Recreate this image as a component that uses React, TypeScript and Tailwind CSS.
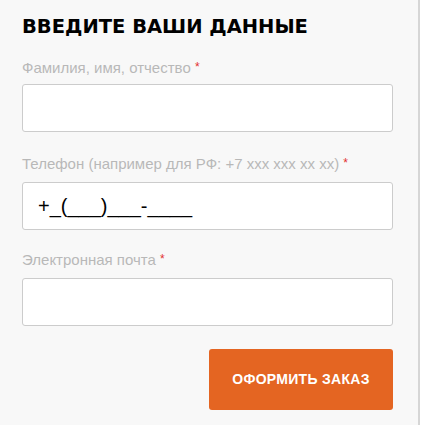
export default function App() {
  return (
    <div className="flex h-[425px] w-[422px] bg-white">
      <div className="w-[420px] border-r-2 border-[#d6d6d6] bg-[#f8f8f8] pl-[22px] pr-[25px] pt-[15px] font-['Liberation_Sans',Arial,sans-serif]">
        <h2 className="font-['DejaVu_Sans',sans-serif] text-[19.5px] font-bold leading-[24px] text-black">
          ВВЕДИТЕ ВАШИ ДАННЫЕ
        </h2>

        <Field label="Фамилия, имя, отчество" className="mt-[20px]" gap="mt-[6px]" />
        <Field
          label="Телефон (например для РФ: +7 xxx xxx xx xx)"
          className="mt-[23px]"
          gap="mt-[8px]"
          value="+_(___)___-____"
        />
        <Field label="Электронная почта" className="mt-[21px]" gap="mt-[8px]" />

        <div className="mt-[23px] flex justify-end">
          <button className="h-[61px] w-[184px] rounded-[3px] bg-[#e46522] text-[14px] font-bold tracking-[0.3px] text-white">
            ОФОРМИТЬ ЗАКАЗ
          </button>
        </div>
      </div>
    </div>
  );
}

function Field({
  label,
  value,
  gap,
  className = "",
}: {
  label: string;
  value?: string;
  gap: string;
  className?: string;
}) {
  return (
    <div className={className}>
      <p className="text-[15px] leading-[18px] text-[#b8b8b8]">
        {label}{" "}
        <span className="relative -top-[2px] text-[12px] text-[#e2302f]">*</span>
      </p>
      <div
        className={`${gap} flex h-[48px] items-center rounded-[3px] border border-[#cccccc] bg-white px-[15px] text-[20px] text-black`}
      >
        {value}
      </div>
    </div>
  );
}
